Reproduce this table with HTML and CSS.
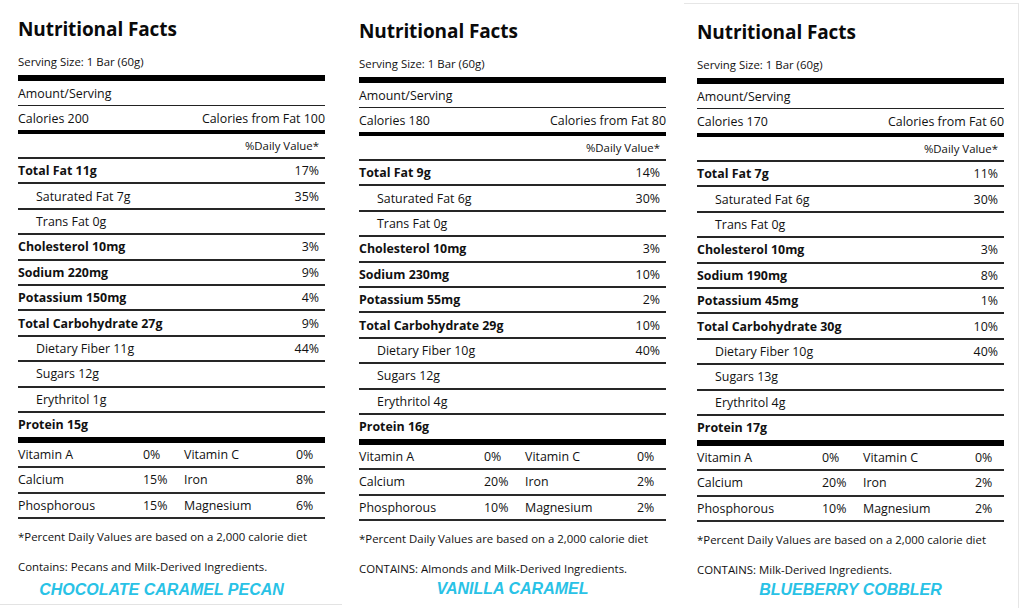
FILE: index.html
```html
<!DOCTYPE html>
<html>
<head>
<meta charset="utf-8">
<link rel="stylesheet" href="styles.css">
</head>
<body>
<div class="page">
  <section class="panel p1">
    <h1 class="title">Nutritional Facts</h1>
    <div class="serving">Serving Size: 1 Bar (60g)</div>
    <div class="bar thick6"></div>
    <div class="row thin">Amount/Serving</div>
    <div class="row cal"><span>Calories 200</span><span>Calories from Fat 100</span></div>
    <div class="bar thick4"></div>
    <div class="row dv"><span></span><span class="pct">%Daily Value*</span></div>
    <div class="row b"><span>Total Fat 11g</span><span class="pct">17%</span></div>
    <div class="row ind"><span>Saturated Fat 7g</span><span class="pct">35%</span></div>
    <div class="row ind"><span>Trans Fat 0g</span></div>
    <div class="row b"><span>Cholesterol 10mg</span><span class="pct">3%</span></div>
    <div class="row b"><span>Sodium 220mg</span><span class="pct">9%</span></div>
    <div class="row b"><span>Potassium 150mg</span><span class="pct">4%</span></div>
    <div class="row b"><span>Total Carbohydrate 27g</span><span class="pct">9%</span></div>
    <div class="row ind"><span>Dietary Fiber 11g</span><span class="pct">44%</span></div>
    <div class="row ind"><span>Sugars 12g</span></div>
    <div class="row ind"><span>Erythritol 1g</span></div>
    <div class="row b last"><span>Protein 15g</span></div>
    <div class="bar thick6"></div>
    <div class="vrow"><span>Vitamin A</span><span>0%</span><span>Vitamin C</span><span>0%</span></div>
    <div class="vrow"><span>Calcium</span><span>15%</span><span>Iron</span><span>8%</span></div>
    <div class="vrow"><span>Phosphorous</span><span>15%</span><span>Magnesium</span><span>6%</span></div>
    <p class="note">*Percent Daily Values are based on a 2,000 calorie diet</p>
    <p class="contains">Contains: Pecans and Milk-Derived Ingredients.</p>
    <div class="flavor shift">CHOCOLATE CARAMEL PECAN</div>
  </section>

  <section class="panel p2">
    <h1 class="title">Nutritional Facts</h1>
    <div class="serving">Serving Size: 1 Bar (60g)</div>
    <div class="bar thick6"></div>
    <div class="row thin">Amount/Serving</div>
    <div class="row cal"><span>Calories 180</span><span>Calories from Fat 80</span></div>
    <div class="bar thick4"></div>
    <div class="row dv"><span></span><span class="pct">%Daily Value*</span></div>
    <div class="row b"><span>Total Fat 9g</span><span class="pct">14%</span></div>
    <div class="row ind"><span>Saturated Fat 6g</span><span class="pct">30%</span></div>
    <div class="row ind"><span>Trans Fat 0g</span></div>
    <div class="row b"><span>Cholesterol 10mg</span><span class="pct">3%</span></div>
    <div class="row b"><span>Sodium 230mg</span><span class="pct">10%</span></div>
    <div class="row b"><span>Potassium 55mg</span><span class="pct">2%</span></div>
    <div class="row b"><span>Total Carbohydrate 29g</span><span class="pct">10%</span></div>
    <div class="row ind"><span>Dietary Fiber 10g</span><span class="pct">40%</span></div>
    <div class="row ind"><span>Sugars 12g</span></div>
    <div class="row ind"><span>Erythritol 4g</span></div>
    <div class="row b last"><span>Protein 16g</span></div>
    <div class="bar thick6"></div>
    <div class="vrow"><span>Vitamin A</span><span>0%</span><span>Vitamin C</span><span>0%</span></div>
    <div class="vrow"><span>Calcium</span><span>20%</span><span>Iron</span><span>2%</span></div>
    <div class="vrow"><span>Phosphorous</span><span>10%</span><span>Magnesium</span><span>2%</span></div>
    <p class="note">*Percent Daily Values are based on a 2,000 calorie diet</p>
    <p class="contains">CONTAINS: Almonds and Milk-Derived Ingredients.</p>
    <div class="flavor">VANILLA CARAMEL</div>
  </section>

  <section class="panel p3">
    <h1 class="title">Nutritional Facts</h1>
    <div class="serving">Serving Size: 1 Bar (60g)</div>
    <div class="bar thick6"></div>
    <div class="row thin">Amount/Serving</div>
    <div class="row cal"><span>Calories 170</span><span>Calories from Fat 60</span></div>
    <div class="bar thick4"></div>
    <div class="row dv"><span></span><span class="pct">%Daily Value*</span></div>
    <div class="row b"><span>Total Fat 7g</span><span class="pct">11%</span></div>
    <div class="row ind"><span>Saturated Fat 6g</span><span class="pct">30%</span></div>
    <div class="row ind"><span>Trans Fat 0g</span></div>
    <div class="row b"><span>Cholesterol 10mg</span><span class="pct">3%</span></div>
    <div class="row b"><span>Sodium 190mg</span><span class="pct">8%</span></div>
    <div class="row b"><span>Potassium 45mg</span><span class="pct">1%</span></div>
    <div class="row b"><span>Total Carbohydrate 30g</span><span class="pct">10%</span></div>
    <div class="row ind"><span>Dietary Fiber 10g</span><span class="pct">40%</span></div>
    <div class="row ind"><span>Sugars 13g</span></div>
    <div class="row ind"><span>Erythritol 4g</span></div>
    <div class="row b last"><span>Protein 17g</span></div>
    <div class="bar thick6"></div>
    <div class="vrow"><span>Vitamin A</span><span>0%</span><span>Vitamin C</span><span>0%</span></div>
    <div class="vrow"><span>Calcium</span><span>20%</span><span>Iron</span><span>2%</span></div>
    <div class="vrow"><span>Phosphorous</span><span>10%</span><span>Magnesium</span><span>2%</span></div>
    <p class="note">*Percent Daily Values are based on a 2,000 calorie diet</p>
    <p class="contains">CONTAINS: Milk-Derived Ingredients.</p>
    <div class="flavor">BLUEBERRY COBBLER</div>
  </section>
</div>
</body>
</html>
```

FILE: styles.css
```css
* { box-sizing: border-box; }
html, body { margin: 0; padding: 0; background: #fff; }
body {
  font-family: "Open Sans", "Liberation Sans", sans-serif;
  color: #111;
  width: 1024px;
  height: 608px;
  overflow: hidden;
}
.page {
  display: flex;
  align-items: flex-start;
}
.panel {
  width: 342px;
  padding: 14px 17px 0 18px;
  display: flex;
  flex-direction: column;
}
.p1 {
  height: 605px;
  border-bottom: 1px solid #e3e3e3;
}
.p2 {
  padding-left: 17px;
  padding-right: 18px;
  padding-top: 16px;
}
.p3 {
  width: 335px;
  margin-top: 3px;
  padding: 13px 14px 0 13px;
  border-top: 1px solid #e6e6e6;
  border-right: 1px solid #e6e6e6;
  height: 605px;
}
.title {
  margin: 0;
  font-size: 19px;
  font-weight: 700;
  line-height: 30px;
  color: #0a0a0a;
  letter-spacing: -0.1px;
}
.serving {
  margin-top: 8px;
  font-size: 11.4px;
  line-height: 20px;
  margin-bottom: 3px;
}
.bar { background: #000; }
.thick6 { height: 6px; }
.thick4 { height: 4px; }
.row {
  display: flex;
  justify-content: space-between;
  align-items: center;
  font-size: 12.4px;
  height: 25.4px;
  border-bottom: 2px solid #262626;
}
.row.thin { height: 25px; border-bottom: 1px solid #222; }
.row.cal { height: 24px; border-bottom: none; }
.row.dv { height: 25px; font-size: 11.4px; }
.row.last { border-bottom: none; height: 24px; }
.row.b span:first-child { font-weight: 700; }
.row.ind { padding-left: 18px; }
.pct { padding-right: 6px; }
.vrow {
  display: grid;
  grid-template-columns: 125px 41px 112px 1fr;
  align-items: center;
  font-size: 12.4px;
  height: 25.3px;
  border-bottom: 2px solid #2a2a2a;
}
.note {
  margin: 10px 0 0;
  font-size: 11.4px;
  line-height: 16px;
}
.contains {
  margin: 14px 0 0;
  font-size: 11.4px;
  line-height: 16px;
}
.flavor {
  margin-top: 5px;
  text-align: center;
  font-family: "Liberation Sans", "DejaVu Sans", sans-serif;
  font-weight: 700;
  font-style: italic;
  font-size: 16px;
  letter-spacing: 0;
  color: #29c2e6;
  line-height: 20px;
}
.p2 .flavor, .p3 .flavor { margin-top: 2px; }
.flavor.shift { padding-right: 20px; }
```
